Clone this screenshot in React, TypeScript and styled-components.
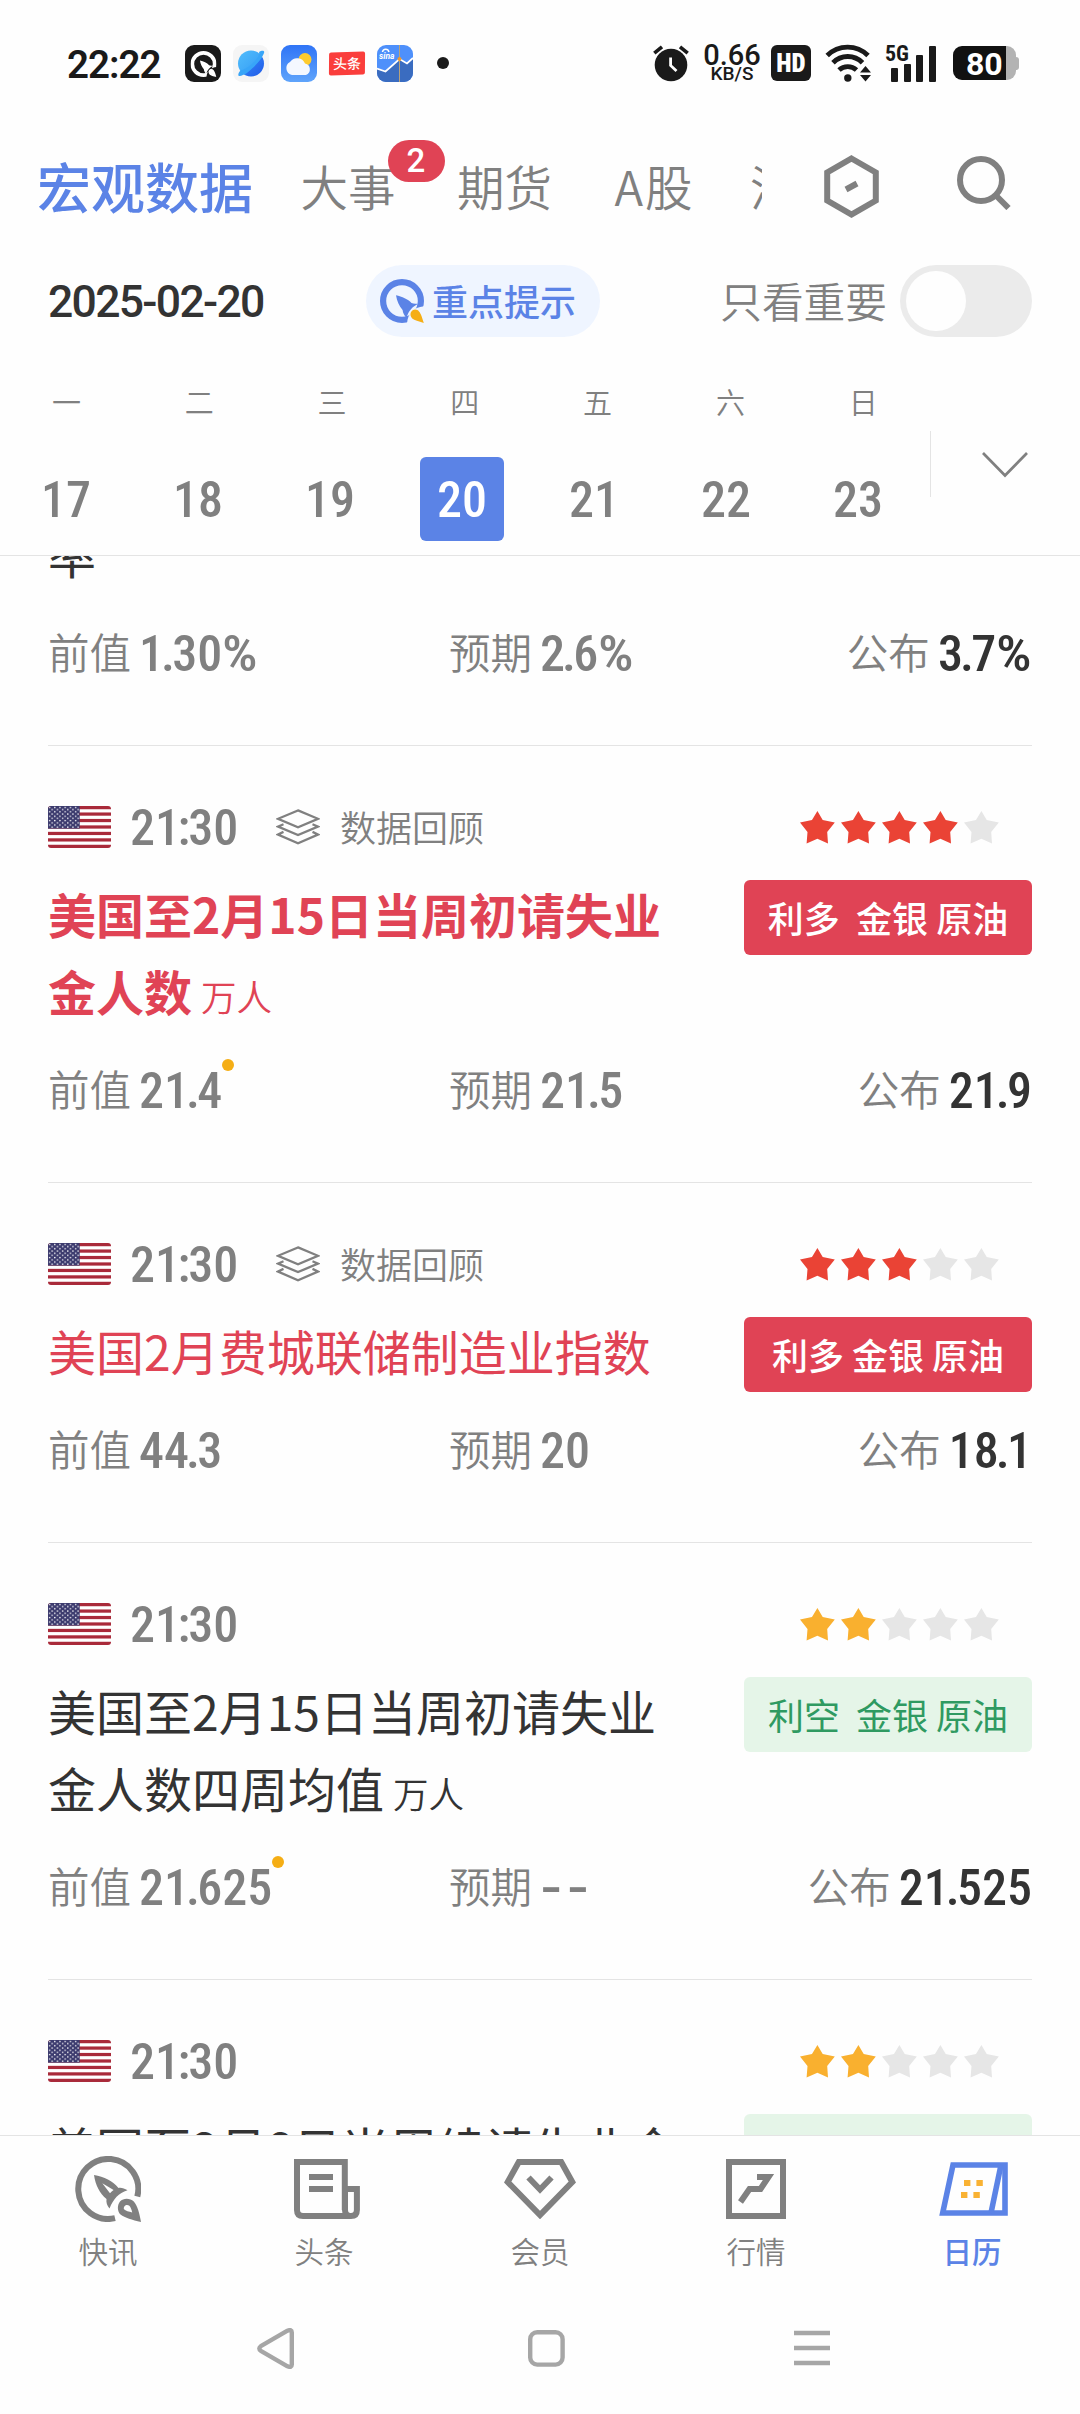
import React from 'react';
import styled, { createGlobalStyle, css } from 'styled-components';

const CJK = '"Noto Sans CJK SC", sans-serif';
const LATIN = 'Roboto, "Noto Sans CJK SC", sans-serif';

const GREY = '#808080';
const INK = '#333333';
const BLUE = '#5b83e6';
const RED = '#e04355';
const LINE = '#e4e4e4';

const GlobalStyle = createGlobalStyle`
  * { box-sizing: border-box; }
  html, body { margin: 0; padding: 0; background: #fefefe; }
  body { font-family: ${CJK}; color: ${INK}; }
  svg { display: block; flex: none; }
`;

const Screen = styled.div`
  width: 1080px;
  height: 2414px;
  display: flex;
  flex-direction: column;
  overflow: hidden;
  background: #fefefe;
`;

/* ---------- status bar ---------- */

const StatusBar = styled.header`
  height: 126px;
  flex: none;
  display: flex;
  align-items: center;
  justify-content: space-between;
  padding: 0 61px 0 67px;
  color: #1a1a1a;
  font-family: ${LATIN};
`;

const StatusGroup = styled.div`
  display: flex;
  align-items: center;
`;

const Clock = styled.div`
  width: 118px;
  font-size: 38.5px;
  line-height: 40px;
  font-weight: 600;
  letter-spacing: -1px;
  padding-top: 3px;
`;

const AppIcons = styled.div`
  display: flex;
  align-items: center;
  gap: 12px;
`;

const AppTile = styled.div<{ $bg: string }>`
  width: 36px;
  height: 37px;
  border-radius: 9px;
  overflow: hidden;
  background: ${(p) => p.$bg};
`;

const NewsTile = styled.div`
  width: 36px;
  height: 23px;
  border-radius: 2px;
  background: #fa3e3c;
  color: #fff;
  font: 500 14px/22px ${CJK};
  text-align: center;
  transform: rotate(-1.5deg) skewX(-2deg);
`;

const MoreDot = styled.i`
  width: 12px;
  height: 12px;
  border-radius: 50%;
  background: #1a1a1a;
  margin-left: 12px;
`;

const NetSpeed = styled.div`
  width: 58px;
  margin: 0 10px 0 14px;
  text-align: center;
  font-size: 29px;
  line-height: 22px;
  font-weight: 500;
  small {
    display: block;
    font-size: 19px;
    line-height: 16px;
    font-weight: 500;
  }
`;

const HdBadge = styled.div`
  width: 40px;
  height: 36px;
  border-radius: 6px;
  background: #1a1a1a;
  color: #fff;
  font-size: 25px;
  line-height: 37px;
  font-weight: 900;
  font-stretch: 75%;
  text-align: center;
  margin-right: 14px;
`;

const Signal = styled.div`
  display: flex;
  align-items: flex-end;
  gap: 5.6px;
  width: 51px;
  height: 37px;
  padding-left: 6px;
  margin: 0 17px 0 14px;
  position: relative;
  span {
    position: absolute;
    left: 0;
    top: 0;
    font-size: 22px;
    line-height: 17px;
    font-weight: 700;
    font-stretch: 75%;
  }
`;

const SignalBar = styled.i<{ $h: number }>`
  width: 7px;
  height: ${(p) => p.$h}px;
  border-radius: 1px;
  background: #1a1a1a;
`;

const Battery = styled.div`
  display: flex;
  align-items: center;
`;

const BatteryBody = styled.div`
  width: 63px;
  height: 34px;
  border-radius: 9px;
  background: linear-gradient(90deg, #111 53px, #b3b3b3 53px);
  color: #fff;
  font-size: 32px;
  line-height: 36px;
  font-weight: 700;
  padding-left: 13px;
`;

const BatteryTip = styled.i`
  width: 3px;
  height: 13px;
  border-radius: 0 3px 3px 0;
  background: #b3b3b3;
`;

/* ---------- top tabs ---------- */

const TopBar = styled.nav`
  height: 118px;
  flex: none;
  display: flex;
  align-items: center;
  padding: 2px 0 0 37px;
`;

const TabStrip = styled.div`
  width: 725px;
  height: 116px;
  display: flex;
  align-items: center;
  gap: 61.5px;
  overflow: hidden;
  white-space: nowrap;
`;

const Tab = styled.div<{ $active?: boolean; $pull?: number }>`
  position: relative;
  flex: none;
  font-size: 47.5px;
  line-height: 70px;
  font-weight: 350;
  color: ${GREY};
  margin-left: ${(p) => -(p.$pull ?? 0)}px;
  ${(p) =>
    p.$active &&
    css`
      font-size: 54px;
      font-weight: 500;
      color: ${BLUE};
      margin-right: -14px;
    `}
`;

const WideLetter = styled.span`
  margin: 0 2px 0 1px;
`;

const Badge = styled.span`
  position: absolute;
  left: 87px;
  top: -11px;
  width: 57px;
  height: 42px;
  border-radius: 21px;
  background: ${RED};
  color: #fff;
  font: 500 33px/42px ${LATIN};
  text-align: center;
`;

const TopActions = styled.div`
  display: flex;
  align-items: center;
  gap: 78px;
  padding-left: 62px;
`;

/* ---------- filter row ---------- */

const FilterRow = styled.div`
  height: 114px;
  flex: none;
  display: flex;
  align-items: center;
  padding: 0 48px;
`;

const DateText = styled.div`
  width: 318px;
  font: 500 44.5px/50px ${LATIN};
  letter-spacing: -1.7px;
  padding-top: 2px;
`;

const HintPill = styled.div`
  width: 234px;
  height: 72px;
  border-radius: 36px;
  background: #eff5ff;
  display: flex;
  align-items: center;
  gap: 8px;
  padding-left: 14px;
  color: ${BLUE};
  font-size: 36px;
  font-weight: 500;
  line-height: 50px;
`;

const OnlyImportant = styled.label`
  margin-left: auto;
  display: flex;
  align-items: center;
  gap: 13px;
  color: ${GREY};
  font-size: 41.7px;
  font-weight: 350;
  line-height: 60px;
`;

const Lift = styled.span<{ $by?: number }>`
  padding-bottom: ${(p) => p.$by ?? 6}px;
`;

const Switch = styled.span`
  width: 132px;
  height: 72px;
  border-radius: 36px;
  background: #ebebeb;
  padding: 6px;
  &::before {
    content: '';
    display: block;
    width: 60px;
    height: 60px;
    border-radius: 50%;
    background: #fefefe;
  }
`;

/* ---------- week ---------- */

const Week = styled.section`
  height: 198px;
  flex: none;
  display: flex;
  border-bottom: 1px solid ${LINE};
`;

const Days = styled.div`
  width: 930px;
`;

const DayRow = styled.div<{ $pitch: number }>`
  display: grid;
  grid-template-columns: repeat(7, ${(p) => p.$pitch}px);
  justify-items: center;
`;

const DayName = styled.div`
  font-size: 29px;
  line-height: 42px;
  font-weight: 350;
  color: ${GREY};
  margin: 22px 0 35px;
`;

const figures = css`
  font-family: ${LATIN};
  font-stretch: 75%;
  font-size: 50px;
  line-height: 60px;
  font-weight: 500;
`;

const DayNumber = styled.div<{ $on?: boolean }>`
  ${figures}
  width: 84px;
  height: 84px;
  line-height: 86px;
  border-radius: 6px;
  text-align: center;
  color: ${(p) => (p.$on ? '#fff' : GREY)};
  background: ${(p) => (p.$on ? BLUE : 'transparent')};
`;

const Expand = styled.div`
  flex: 1;
  height: 66px;
  margin-top: 73px;
  border-left: 1px solid ${LINE};
  display: flex;
  align-items: center;
  padding: 2px 0 0 51px;
`;

/* ---------- event list ---------- */

const List = styled.main`
  flex: 1;
  min-height: 0;
  overflow: hidden;
  padding: 0 48px;
`;

const Event = styled.article<{ $cut?: boolean }>`
  border-bottom: 1px solid ${LINE};
  padding: ${(p) => (p.$cut ? 0 : 60)}px 0 64px;
  margin-top: ${(p) => (p.$cut ? -39 : 0)}px;
`;

const EventHead = styled.div`
  height: 42px;
  display: flex;
  align-items: center;
  margin-bottom: 29px;
`;

const Time = styled.div`
  ${figures}
  width: 146px;
  color: ${GREY};
  margin-left: 19px;
  padding-top: 2px;
`;

const Point = styled.span`
  margin: 0 -2.6px 0 -3px;
`;

const Colon = styled.span`
  margin: 0 -1.8px 0 -2.6px;
`;

const Percent = styled.span`
  display: inline-block;
  margin-right: 4px;
  transform: scaleX(1.12);
  transform-origin: left center;
`;

const Dashes = styled.span`
  display: inline-block;
  letter-spacing: 3px;
  transform: scaleX(1.45);
  transform-origin: left center;
`;

const Review = styled.div`
  display: flex;
  align-items: center;
  gap: 20px;
  color: ${GREY};
  font-size: 36px;
  line-height: 50px;
  font-weight: 350;
`;

const Stars = styled.div`
  display: flex;
  gap: 6px;
  margin: 1px 33px 0 auto;
`;

const EventBody = styled.div`
  display: flex;
  justify-content: space-between;
  align-items: flex-start;
`;

const Title = styled.h2<{ $tone: 'hot' | 'warm' | 'plain' }>`
  margin: 0;
  width: 640px;
  font-size: 48px;
  line-height: 77px;
  font-weight: ${(p) => (p.$tone === 'hot' ? 700 : 400)};
  color: ${(p) => (p.$tone === 'plain' ? INK : RED)};
  white-space: nowrap;
  div { height: 77px; margin-top: -2px; margin-bottom: 2px; }
  small {
    font-size: 35.5px;
    font-weight: 350;
    margin-left: 9px;
  }
`;

const Tag = styled.div<{ $kind: 'bull' | 'bear' }>`
  width: 288px;
  height: 75px;
  margin: 3px 0 -3px;
  border-radius: 6px;
  display: flex;
  justify-content: center;
  font-size: 36px;
  line-height: 75px;
  white-space: pre;
  ${(p) =>
    p.$kind === 'bull'
      ? css`
          color: #fff;
          font-weight: 500;
          background: ${RED};
        `
      : css`
          color: #2f9a61;
          font-weight: 400;
          background: #e5f5e8;
        `}
`;

const Values = styled.div`
  height: 60px;
  margin-top: 27px;
  display: grid;
  grid-template-columns: 401px 1fr auto;
`;

const Value = styled.div<{ $strong?: boolean }>`
  display: flex;
  align-items: center;
  gap: 8px;
  color: ${GREY};
  b {
    ${figures}
    position: relative;
    color: ${(p) => (p.$strong ? INK : GREY)};
  }
`;

const ValueLabel = styled.span`
  font-size: 41.5px;
  line-height: 60px;
  font-weight: 350;
  padding-bottom: 6px;
`;

const RevisedDot = styled.i`
  position: absolute;
  right: -12px;
  top: -2px;
  width: 12px;
  height: 12px;
  border-radius: 50%;
  background: #f5ae15;
`;

/* ---------- bottom ---------- */

const BottomNav = styled.nav`
  height: 145px;
  flex: none;
  border-top: 1px solid ${LINE};
  display: grid;
  grid-template-columns: repeat(5, 1fr);
`;

const NavItem = styled.div<{ $active?: boolean }>`
  display: flex;
  flex-direction: column;
  align-items: center;
  color: ${(p) => (p.$active ? BLUE : GREY)};
  font-size: 29.5px;
  line-height: 42px;
  font-weight: ${(p) => (p.$active ? 500 : 350)};
`;

const NavIcon = styled.div<{ $shift?: number }>`
  height: 66px;
  margin: 20px 0 7px;
  padding-left: ${(p) => (p.$shift ?? 0) * 2}px;
  display: flex;
  align-items: center;
`;

const SystemNav = styled.footer`
  height: 134px;
  flex: none;
  display: flex;
  align-items: center;
  padding: 2px 0 0 257px;
  color: #a6a6a6;
`;

const SysButton = styled.div<{ $gap: number }>`
  margin-right: ${(p) => p.$gap}px;
`;

/* ---------- drawings ---------- */

const RocketMark = ({ size, ring, flame, gap }: { size: number; ring: string; flame: string; gap: string }) => (
  <svg width={size} height={size} viewBox="0 0 44 44" fill="none">
    <circle cx="22" cy="22" r="18.9" stroke={ring} strokeWidth="6.2" />
    <path d="M27 46 C27 35 33 27.5 46 27 V46 Z" fill={gap} />
    <path d="M16 16.2 C22 17.5 28 20 31.5 24 C34 24.6 36.5 24.8 38.5 25 C33 27 28.5 31.5 26.6 38.8 C24.5 37 22.8 34 22.6 31 C19 27 17 22 16 16.2 Z" fill={ring} />
    <path d="M43.8 44 C38.5 42.5 34.5 41.5 32.2 39.6 C28.5 35 31.5 30.6 35.2 30.6 C38.5 30.6 40 33.5 41.5 37 Z" fill={flame} />
  </svg>
);

const PlanetIcon = () => (
  <svg width="36" height="37" viewBox="0 0 36 37">
    <defs>
      <linearGradient id="planet" x1="0" y1="0" x2="1" y2="1">
        <stop offset="0" stopColor="#52bdfb" />
        <stop offset="0.55" stopColor="#3fa8f8" />
        <stop offset="0.62" stopColor="#2b72f0" />
        <stop offset="1" stopColor="#1f5be8" />
      </linearGradient>
    </defs>
    <circle cx="18" cy="18.5" r="13" fill="url(#planet)" />
    <path d="M8 25 C5 28 4.500 31 6.500 31 C12 31.500 28 17 31 8 C32 5.500 29 5 26 7 C28 12 15 24 8 25 Z" fill="#38a5f8" />
  </svg>
);

const WeatherIcon = () => (
  <svg width="36" height="37" viewBox="0 0 36 37">
    <circle cx="24" cy="14.500" r="6.500" fill="#fdcb2e" />
    <path d="M11 30 A7 7 0 0 1 9 17 A8.500 8.500 0 0 1 24 18.500 A6 6 0 0 1 25 30 Z" fill="#f4f8ff" />
  </svg>
);

const SinaIcon = () => (
  <svg width="36" height="37" viewBox="0 0 36 37">
    <path d="M0 23 L9 26 L22 14 L30 18 L36 13 V37 H0 Z" fill="#3a6cc0" />
    <path d="M0 23.500 L8.500 26.500 L22.500 14 L30 18.500 L36 13" fill="none" stroke="#fff" strokeWidth="1.8" />
    <path d="M22.500 0 V37" stroke="#b7a27c" strokeWidth="1" />
    <circle cx="22.500" cy="14" r="2" fill="#f39a2b" />
    <path d="M5.500 7 C6 3.500 11 3 12 7" fill="none" stroke="#fff" strokeWidth="1.500" />
    <text x="2" y="13.500" fontFamily="Roboto" fontStyle="italic" fontWeight="700" fontSize="8.500" fill="#fff">sina</text>
  </svg>
);

const AlarmIcon = () => (
  <svg width="36" height="37" viewBox="0 0 36 37" fill="none">
    <circle cx="18" cy="20" r="16.3" fill="#1a1a1a" />
    <path d="M1.300 8.200 L9 1.800 M34.700 8.200 L27 1.800" stroke="#1a1a1a" strokeWidth="3.600" />
    <path d="M17.600 12.500 V20.500 L23.500 26" stroke="#fefefe" strokeWidth="2.800" />
  </svg>
);

const WifiIcon = () => (
  <svg width="46" height="38" viewBox="0 0 46 38" fill="none" stroke="#1a1a1a" strokeWidth="4.900">
    <path d="M2.200 11.500 A29 29 0 0 1 43 11.500" />
    <path d="M8 18.800 A20.500 20.500 0 0 1 37.500 18.800" />
    <path d="M14 26 A13 13 0 0 1 31.500 26" />
    <circle cx="22.800" cy="34" r="3.700" fill="#1a1a1a" stroke="none" />
    <path d="M40.500 22 L46 28.500 H35 Z M40.500 37.500 L46 31 H35 Z" fill="#1a1a1a" stroke="none" />
  </svg>
);

const HexIcon = () => (
  <svg width="55" height="63" viewBox="0 0 55 63" fill="none" stroke={GREY} strokeWidth="6">
    <path d="M27.500 3.500 L51.800 17.500 V45.500 L27.500 59.500 L3.200 45.500 V17.500 Z" />
    <path d="M22 34.500 L33 28.500" />
  </svg>
);

const SearchSvg = styled.svg`
  margin-top: -6px;
`;

const SearchIcon = () => (
  <SearchSvg width="54" height="54" viewBox="0 0 54 54" fill="none" stroke={GREY} strokeWidth="6">
    <circle cx="24" cy="24" r="21" />
    <path d="M39 39.500 L51.500 52" />
  </SearchSvg>
);

const ChevronIcon = () => (
  <svg width="46" height="26" viewBox="0 0 46 26" fill="none" stroke={GREY} strokeWidth="2.700">
    <path d="M1 1 L23 23.500 L45 1" />
  </svg>
);

const Flag = () => (
  <svg width="63" height="42" viewBox="0 0 63 42">
    <defs>
      <clipPath id="flagClip">
        <rect width="63" height="42" rx="3" />
      </clipPath>
      <pattern id="flagStars" width="5.200" height="4.400" patternUnits="userSpaceOnUse">
        <circle cx="1.600" cy="1.400" r="0.750" fill="#fff" />
        <circle cx="4.200" cy="3.600" r="0.750" fill="#fff" />
      </pattern>
    </defs>
    <g clipPath="url(#flagClip)">
      <rect width="63" height="42" fill="#fff" />
      {Array.from({ length: 7 }, (_, i) => (
        <rect key={i} y={i * 6.46} width="63" height="3.23" fill="#a92a3a" />
      ))}
      <rect width="31.700" height="22.600" fill="#3c3b6e" />
      <rect width="31" height="22" fill="url(#flagStars)" />
    </g>
  </svg>
);

const LayersIcon = () => (
  <svg width="44" height="36" viewBox="0 0 44 36" fill="none" stroke={GREY} strokeWidth="2.300">
    <path d="M22 1.400 L42 9.800 L22 18.200 L2 9.800 Z" />
    <path d="M7.500 15.300 L2 17.600 L22 26.100 L42 17.600 L36.500 15.300" />
    <path d="M7.500 22.900 L2 25.500 L22 34.200 L42 25.500 L36.500 22.900" />
  </svg>
);

const Star = ({ color }: { color: string }) => (
  <svg width="35" height="33" viewBox="0 0 35 33" fill={color}>
    <path d="M17.400 0 L22.700 8.900 L34.800 11.500 L27.200 21 L28 32.500 L17.400 27.800 L6.600 32.500 L7.500 21 L0 11.500 L12 8.900 Z" />
  </svg>
);

const FlashIcon = () => (
  <svg width="66" height="66" viewBox="0 0 66 66" fill="none">
    <path d="M62.300 40.500 A30 30 0 1 0 40 62.200" stroke={GREY} strokeWidth="6" />
    <path
      fillRule="evenodd"
      fill={GREY}
      d="M19 19 C29 20.500 38 25 43.500 32 C46.500 31.500 49.500 32.500 52.500 34.300 C43.500 37 38.500 43 34.500 52.500 C32 49.500 31 46.500 31.500 43 C24.500 37 20.500 29 19 19 Z M27.300 27.200 L35 37.200 C36 36 37.300 35 38.600 34 Z"
    />
    <path
      fillRule="evenodd"
      fill={GREY}
      d="M66 66 C57 64 50 62 45.500 58.600 C42 55 42.200 49 45 45.500 C48.500 41.600 55 41.800 58.800 45.500 C62.500 50 64.500 57 66 66 Z M57.200 56.500 C56.500 53.500 55.800 51 54 49.500 C51.500 47.800 48 50 49 53.300 C50.500 54.800 54 55.800 57.200 56.500 Z"
    />
  </svg>
);

const HeadlineIcon = () => (
  <svg width="66" height="60" viewBox="0 0 66 60" fill="none" stroke={GREY} strokeWidth="6">
    <path d="M50.800 51 V3 H3 V51 Q3 57 9 57 H57 Q62.900 57 62.900 51 V30 H51 V51 Q51 57 56.500 57" />
    <path d="M15 18 H39 M15 30 H39" />
  </svg>
);

const MemberIcon = () => (
  <svg width="72" height="60" viewBox="0 0 72 60" fill="none" stroke={GREY} strokeWidth="6">
    <path d="M14.800 3 H57.200 L68.300 23 L36 56 L3.700 23 Z" />
    <path d="M24.500 18.500 L36 30.500 L47.500 18.500" />
  </svg>
);

const QuotesIcon = () => (
  <svg width="60" height="60" viewBox="0 0 60 60" fill="none" stroke={GREY} strokeWidth="6">
    <path d="M3 3 H57 V57 H3 Z" />
    <path d="M14.500 43 L23.500 30 H34.500 L42.500 18 H31" />
  </svg>
);

const CalendarIcon = () => (
  <svg width="69" height="54" viewBox="0 0 69 54" fill="none" stroke={BLUE} strokeWidth="5.600">
    <path d="M14 3 H66 V51 H3.700 Z" />
    <path d="M62 3 L52 51" />
    <path d="M25 18 h6.400 v6 h-6.400 Z M37.400 18 h6.400 v6 h-6.400 Z M22 30 h6.400 v6 h-6.400 Z M34.400 30 h6.400 v6 h-6.400 Z" fill="#f9b233" stroke="none" />
  </svg>
);

const BackIcon = () => (
  <svg width="37" height="41" viewBox="0 0 37 41" fill="none" stroke="currentColor" strokeWidth="4.400" strokeLinejoin="round">
    <path d="M30.500 2.700 Q34.800 1 34.800 4.500 V36.500 Q34.800 40 30.500 38.300 L3.800 22.800 Q0.800 20.500 3.800 18.200 Z" />
  </svg>
);

const HomeIcon = () => (
  <svg width="37" height="37" viewBox="0 0 37 37" fill="none" stroke="currentColor" strokeWidth="4.400">
    <rect x="2.200" y="2.200" width="32.400" height="32.400" rx="7" />
  </svg>
);

const MenuIcon = () => (
  <svg width="36" height="36" viewBox="0 0 36 36" stroke="currentColor" strokeWidth="4.400">
    <path d="M0 3 H36 M0 18 H36 M0 33 H36" />
  </svg>
);

/* ---------- data ---------- */

type EventData = {
  cut?: boolean;
  review?: boolean;
  stars?: number;
  tone: 'hot' | 'warm' | 'plain';
  lines: string[];
  unit?: string;
  tag?: { kind: 'bull' | 'bear'; text: string };
  values?: [string, string, string];
  revised?: boolean;
};

const events: EventData[] = [
  { cut: true, tone: 'plain', lines: ['率'], values: ['1.30%', '2.6%', '3.7%'] },
  {
    review: true,
    stars: 4,
    tone: 'hot',
    lines: ['美国至2月15日当周初请失业', '金人数'],
    unit: '万人',
    tag: { kind: 'bull', text: '利多  金银 原油' },
    values: ['21.4', '21.5', '21.9'],
    revised: true,
  },
  {
    review: true,
    stars: 3,
    tone: 'warm',
    lines: ['美国2月费城联储制造业指数'],
    tag: { kind: 'bull', text: '利多 金银 原油' },
    values: ['44.3', '20', '18.1'],
  },
  {
    stars: 2,
    tone: 'plain',
    lines: ['美国至2月15日当周初请失业', '金人数四周均值'],
    unit: '万人',
    tag: { kind: 'bear', text: '利空  金银 原油' },
    values: ['21.625', '--', '21.525'],
    revised: true,
  },
  { stars: 2, tone: 'plain', lines: ['美国至2月8日当周续请失业金'], tag: { kind: 'bear', text: '' } },
];

const week: [string, number][] = [
  ['一', 17],
  ['二', 18],
  ['三', 19],
  ['四', 20],
  ['五', 21],
  ['六', 22],
  ['日', 23],
];

const Figures = ({ text }: { text: string }) => {
  if (text === '--') return <Dashes>--</Dashes>;
  return (
    <>
      {text.split(/([.:%])/).map((part, i) => {
        if (part === '%') return <Percent key={i}>%</Percent>;
        if (part === '.') return <Point key={i}>.</Point>;
        if (part === ':') return <Colon key={i}>:</Colon>;
        return part;
      })}
    </>
  );
};

const EventItem = ({ e }: { e: EventData }) => (
  <Event $cut={e.cut}>
    {e.stars && (
      <EventHead>
        <Flag />
        <Time>
          <Figures text="21:30" />
        </Time>
        {e.review && (
          <Review>
            <LayersIcon />
            <Lift $by={3}>数据回顾</Lift>
          </Review>
        )}
        <Stars>
          {[0, 1, 2, 3, 4].map((i) => (
            <Star key={i} color={i < e.stars! ? (e.stars! > 2 ? '#ea4335' : '#f9b02f') : '#e6e6e6'} />
          ))}
        </Stars>
      </EventHead>
    )}
    <EventBody>
      <Title $tone={e.tone}>
        {e.lines.map((line, i) => (
          <div key={line}>
            {line}
            {e.unit && i === e.lines.length - 1 && <small>{e.unit}</small>}
          </div>
        ))}
      </Title>
      {e.tag && (
        <Tag $kind={e.tag.kind}>
          <Lift>{e.tag.text}</Lift>
        </Tag>
      )}
    </EventBody>
    {e.values && (
      <Values>
        <Value>
          <ValueLabel>前值</ValueLabel>
          <b>
            <Figures text={e.values[0]} />
            {e.revised && <RevisedDot />}
          </b>
        </Value>
        <Value>
          <ValueLabel>预期</ValueLabel>
          <b>
            <Figures text={e.values[1]} />
          </b>
        </Value>
        <Value $strong>
          <ValueLabel>公布</ValueLabel>
          <b>
            <Figures text={e.values[2]} />
          </b>
        </Value>
      </Values>
    )}
  </Event>
);

export default function App() {
  return (
    <Screen>
      <GlobalStyle />
      <StatusBar>
        <StatusGroup>
          <Clock>22:22</Clock>
          <AppIcons>
            <AppTile $bg="#1a1a1a">
              <svg width="36" height="37" viewBox="0 0 36 37">
                <g transform="translate(5.500 6)">
                  <RocketMark size={26} ring="#fff" flame="#fff" gap="#1a1a1a" />
                </g>
              </svg>
            </AppTile>
            <AppTile $bg="#f5f5f5">
              <PlanetIcon />
            </AppTile>
            <AppTile $bg="linear-gradient(#2f74f6, #5fa4fb)">
              <WeatherIcon />
            </AppTile>
            <NewsTile>头条</NewsTile>
            <AppTile $bg="#4e90fb">
              <SinaIcon />
            </AppTile>
            <MoreDot />
          </AppIcons>
        </StatusGroup>
        <StatusGroup>
          <AlarmIcon />
          <NetSpeed>
            0.66
            <small>KB/S</small>
          </NetSpeed>
          <HdBadge>HD</HdBadge>
          <WifiIcon />
          <Signal>
            <span>5G</span>
            <SignalBar $h={14} />
            <SignalBar $h={18} />
            <SignalBar $h={27} />
            <SignalBar $h={36} />
          </Signal>
          <Battery>
            <BatteryBody>80</BatteryBody>
            <BatteryTip />
          </Battery>
        </StatusGroup>
      </StatusBar>

      <TopBar>
        <TabStrip>
          <Tab $active>宏观数据</Tab>
          <Tab>
            大事<Badge>2</Badge>
          </Tab>
          <Tab>期货</Tab>
          <Tab>
            <WideLetter>A</WideLetter>股
          </Tab>
          <Tab $pull={4}>沪</Tab>
        </TabStrip>
        <TopActions>
          <HexIcon />
          <SearchIcon />
        </TopActions>
      </TopBar>

      <FilterRow>
        <DateText>2025-02-20</DateText>
        <HintPill>
          <RocketMark size={44} ring={BLUE} flame="#f5ae15" gap="#eff5ff" />
          <Lift $by={2}>重点提示</Lift>
        </HintPill>
        <OnlyImportant>
          <Lift $by={2}>只看重要</Lift>
          <Switch />
        </OnlyImportant>
      </FilterRow>

      <Week>
        <Days>
          <DayRow $pitch={132.8}>
            {week.map(([name]) => (
              <DayName key={name}>{name}</DayName>
            ))}
          </DayRow>
          <DayRow $pitch={132}>
            {week.map(([, n]) => (
              <DayNumber key={n} $on={n === 20}>
                {n}
              </DayNumber>
            ))}
          </DayRow>
        </Days>
        <Expand>
          <ChevronIcon />
        </Expand>
      </Week>

      <List>
        {events.map((e) => (
          <EventItem key={e.lines.join('') + e.tone} e={e} />
        ))}
      </List>

      <BottomNav>
        <NavItem>
          <NavIcon><FlashIcon /></NavIcon>快讯
        </NavItem>
        <NavItem>
          <NavIcon $shift={3}><HeadlineIcon /></NavIcon>头条
        </NavItem>
        <NavItem>
          <NavIcon><MemberIcon /></NavIcon>会员
        </NavItem>
        <NavItem>
          <NavIcon><QuotesIcon /></NavIcon>行情
        </NavItem>
        <NavItem $active>
          <NavIcon $shift={1.5}><CalendarIcon /></NavIcon>日历
        </NavItem>
      </BottomNav>

      <SystemNav>
        <SysButton $gap={234}><BackIcon /></SysButton>
        <SysButton $gap={229}><HomeIcon /></SysButton>
        <SysButton $gap={0}><MenuIcon /></SysButton>
      </SystemNav>
    </Screen>
  );
}
